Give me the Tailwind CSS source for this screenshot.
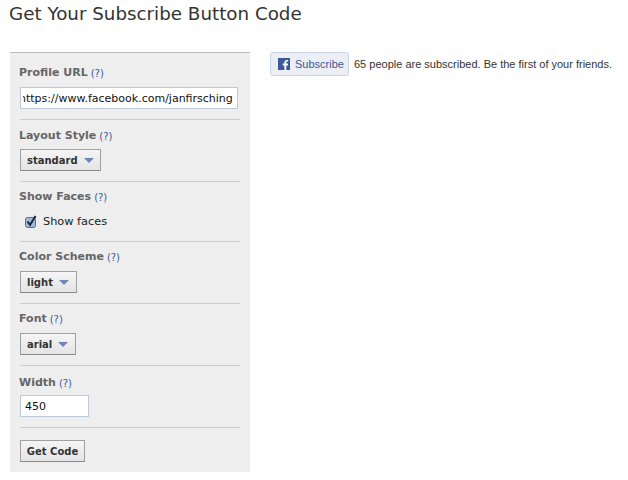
<!DOCTYPE html>
<html lang="en">
<head>
    <meta charset="UTF-8" />
    <title>Get Your Subscribe Button Code</title>
    <script src="https://cdn.jsdelivr.net/npm/@tailwindcss/browser@4"></script>
</head>
<body class="bg-white font-['DejaVu_Sans',sans-serif] w-[628px] h-[480px] overflow-hidden">
    <h1 class="pl-[9px] pt-[2px] h-[52px] text-[18.3px] leading-[24px] text-[#333] font-normal">Get Your Subscribe Button Code</h1>

    <div class="flex items-start">
        <!-- config form -->
        <form class="ml-[10px] w-[240px] h-[420px] bg-[#eeeeee] border-t border-[#bbbbbb] px-[10px] pt-[13px]">
            <div class="h-[54px] border-b border-[#cccccc]">
                <div class="-ml-px h-[14px] flex items-center gap-[3px] text-[11px] font-bold text-[#666]">Profile URL <span class="text-[10px] font-normal text-[#3b5998]">(?)</span></div>
                <input id="profileUrl" type="text" value="https://www.facebook.com/janfirsching" class="mt-[7px] w-[218px] h-[22px] bg-white border border-[#bdc7d8] pl-[2px] pr-[4px] text-[11px] text-[#111]" />
            </div>
            <div class="h-[62px] border-b border-[#cccccc] pt-[9px]">
                <div class="-ml-px h-[14px] flex items-center gap-[3px] text-[11px] font-bold text-[#666]">Layout Style <span class="text-[10px] font-normal text-[#3b5998]">(?)</span></div>
                <button type="button" class="mt-[6px] w-[81px] h-[22px] flex items-center gap-[6px] pl-[6px] bg-gradient-to-b from-[#f5f5f5] to-[#e4e4e4] border border-[#a0a0a0] border-b-[#888] text-[10px] font-bold text-[#333]">standard <span class="w-0 h-0 border-x-[5px] border-x-transparent border-t-[5px] border-t-[#6d84b4]"></span></button>
            </div>
            <div class="h-[60px] border-b border-[#cccccc] pt-[8px]">
                <div class="-ml-px h-[14px] flex items-center gap-[3px] text-[11px] font-bold text-[#666]">Show Faces <span class="text-[10px] font-normal text-[#3b5998]">(?)</span></div>
                <label class="mt-[10px] ml-[5px] flex items-center gap-[6px] text-[11.3px] text-[#222]">
                    <svg width="12" height="14" viewBox="0 0 12 14"><rect x="0.5" y="2.5" width="10" height="10" rx="2" fill="#a3b8da" stroke="#5b6f93"/><path d="M2.5 6.5 L5 10 L10.5 1" fill="none" stroke="#1a2540" stroke-width="2"/></svg>
                    Show faces
                </label>
            </div>
            <div class="h-[62px] border-b border-[#cccccc] pt-[8px]">
                <div class="-ml-px h-[14px] flex items-center gap-[3px] text-[11px] font-bold text-[#666]">Color Scheme <span class="text-[10px] font-normal text-[#3b5998]">(?)</span></div>
                <button type="button" class="mt-[7px] w-[57px] h-[22px] flex items-center gap-[6px] pl-[6px] bg-gradient-to-b from-[#f5f5f5] to-[#e4e4e4] border border-[#a0a0a0] border-b-[#888] text-[10px] font-bold text-[#333]">light <span class="w-0 h-0 border-x-[5px] border-x-transparent border-t-[5px] border-t-[#6d84b4]"></span></button>
            </div>
            <div class="h-[62px] border-b border-[#cccccc] pt-[8px]">
                <div class="-ml-px h-[14px] flex items-center gap-[3px] text-[11px] font-bold text-[#666]">Font <span class="text-[10px] font-normal text-[#3b5998]">(?)</span></div>
                <button type="button" class="mt-[7px] w-[56px] h-[22px] flex items-center gap-[6px] pl-[6px] bg-gradient-to-b from-[#f5f5f5] to-[#e4e4e4] border border-[#a0a0a0] border-b-[#888] text-[10px] font-bold text-[#333]">arial <span class="w-0 h-0 border-x-[5px] border-x-transparent border-t-[5px] border-t-[#6d84b4]"></span></button>
            </div>
            <div class="h-[62px] border-b border-[#cccccc] pt-[10px]">
                <div class="-ml-px h-[14px] flex items-center gap-[3px] text-[11px] font-bold text-[#666]">Width <span class="text-[10px] font-normal text-[#3b5998]">(?)</span></div>
                <input type="text" value="450" class="mt-[5px] w-[69px] h-[22px] bg-white border border-[#bdc7d8] px-[4px] text-[11px] text-[#111]" />
            </div>
            <button type="button" class="mt-[12px] w-[65px] h-[22px] flex items-center justify-center bg-gradient-to-b from-[#f5f5f5] to-[#e4e4e4] border border-[#a0a0a0] border-b-[#888] text-[10px] font-bold text-[#333]">Get Code</button>
        </form>

        <!-- preview -->
        <div class="ml-[20px] flex items-center gap-[5px]">
            <div class="w-[79px] h-[24px] flex items-center gap-[5px] pl-[7px] bg-[#eceef5] border border-[#cad4e7] rounded-[3px] text-[11px] text-[#3b5998] font-['Liberation_Sans',sans-serif]">
                <svg width="12" height="12" viewBox="0 0 12 12"><rect width="12" height="12" fill="#3b5998"/><path d="M8.3 12 V7.4 H9.9 L10.1 5.6 H8.3 V4.5 C8.3 4 8.5 3.6 9.2 3.6 H10.2 V2 C10 2 9.5 1.9 8.8 1.9 C7.4 1.9 6.4 2.8 6.4 4.3 V5.6 H4.8 V7.4 H6.4 V12 Z" fill="#fff"/></svg>
                Subscribe
            </div>
            <span class="text-[11px] text-[#333] font-['Liberation_Sans',sans-serif]">65 people are subscribed. Be the first of your friends.</span>
        </div>
    </div>

    <script>
        // the url is scrolled to its end, as after typing it
        const profileUrl = document.getElementById('profileUrl');
        profileUrl.scrollLeft = profileUrl.scrollWidth;
    </script>
</body>
</html>
